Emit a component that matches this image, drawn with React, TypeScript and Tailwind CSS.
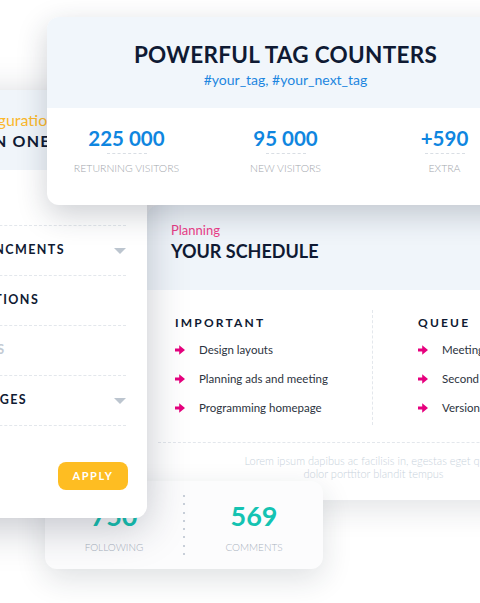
import React from 'react';

const font = { fontFamily: 'Lato, "Noto Sans", sans-serif' };

function Arrow() {
  return (
    <svg width="10" height="10" viewBox="0 0 10 10" className="shrink-0">
      <path d="M0 3.6h4.2V0.2L10 5l-5.8 4.8V6.4H0z" fill="#e6007e" />
    </svg>
  );
}

function Caret() {
  return (
    <svg width="12" height="6" viewBox="0 0 12 6">
      <path d="M0 0h12L6 6z" fill="#bcc5cf" />
    </svg>
  );
}

const menu = [
  { label: 'ANNOUNCMENTS', caret: true, muted: false },
  { label: 'PROMOTIONS', caret: false, muted: false },
  { label: 'UPDATES', caret: false, muted: true },
  { label: 'LANGUAGES', caret: true, muted: false },
];

const important = ['Design layouts', 'Planning ads and meeting', 'Programming homepage'];
const queue = ['Meeting with client', 'Second draft', 'Version control'];

const counters = [
  { value: '225 000', label: 'Returning visitors' },
  { value: '95 000', label: 'New visitors' },
  { value: '+590', label: 'Extra' },
];

export default function App() {
  return (
    <div className="relative h-[603px] w-[480px] overflow-hidden bg-white" style={font}>
      {/* schedule card */}
      <div className="absolute left-[147px] top-[205px] flex h-[295px] w-[453px] flex-col overflow-hidden rounded-xl bg-white shadow-[0_10px_30px_rgba(30,40,60,0.12)]">
        <div className="h-[85px] bg-[#f0f5fa] pl-[24px] pt-[16px]">
          <p className="text-[13px] leading-[18px] text-[#ec3d88]">Planning</p>
          <h2 className="text-[18px] font-bold leading-[24px] text-[#0f1a33]">YOUR SCHEDULE</h2>
        </div>
        <div className="flex pl-[28px] pt-[20px]">
          <div className="w-[197px] pb-[8px] pt-[4px]">
            <h3 className="text-[12px] font-bold leading-[18px] tracking-[2.2px] text-[#0f1a33]">IMPORTANT</h3>
            <ul className="mt-[9px] flex flex-col gap-[11px]">
              {important.map((t) => (
                <li key={t} className="flex h-[18px] items-center gap-[14px] text-[11.5px] text-[#2c3340]">
                  <Arrow />
                  {t}
                </li>
              ))}
            </ul>
          </div>
          <div className="border-l border-dashed border-[#e3e7ec] pl-[45px] pt-[4px]">
            <h3 className="text-[12px] font-bold leading-[18px] tracking-[2.2px] text-[#0f1a33]">QUEUE</h3>
            <ul className="mt-[9px] flex flex-col gap-[11px]">
              {queue.map((t) => (
                <li key={t} className="flex h-[18px] items-center gap-[14px] whitespace-nowrap text-[11.5px] text-[#2c3340]">
                  <Arrow />
                  {t}
                </li>
              ))}
            </ul>
          </div>
        </div>
        <div className="mx-[11px] mt-[17px] border-t border-dashed border-[#e3e7ec]" />
        <p className="mt-[11px] text-center text-[11px] font-light leading-[13px] text-[#c9d3dd]">
          Lorem ipsum dapibus ac facilisis in, egestas eget quam.
          <br />
          dolor porttitor blandit tempus
        </p>
      </div>

      {/* bottom stats card */}
      <div className="absolute left-[45px] top-[481px] flex h-[88px] w-[278px] items-center rounded-xl bg-[#fcfcfd] shadow-[0_10px_30px_rgba(30,40,60,0.14)]">
        <div className="flex flex-1 flex-col items-center pt-[2px]">
          <span className="text-[27px] font-bold leading-[32px] text-[#14c3b2]">750</span>
          <span className="mt-[9px] text-[10px] font-light leading-[12px] text-[#a9b2bd]">FOLLOWING</span>
        </div>
        <div className="flex h-[60px] flex-col justify-between">
          {[0, 1, 2, 3, 4, 5, 6, 7].map((i) => (
            <span key={i} className="h-[2px] w-[2px] rounded-full bg-[#b7c0cc]" />
          ))}
        </div>
        <div className="flex flex-1 flex-col items-center pt-[2px]">
          <span className="text-[27px] font-bold leading-[32px] text-[#14c3b2]">569</span>
          <span className="mt-[9px] text-[10px] font-light leading-[12px] text-[#a9b2bd]">COMMENTS</span>
        </div>
      </div>

      {/* configuration card */}
      <div className="absolute left-[-160px] top-[90px] flex h-[428px] w-[307px] flex-col overflow-hidden rounded-xl bg-white shadow-[0_10px_40px_rgba(30,40,60,0.26)]">
        <div className="h-[80px] bg-[#f0f5fa] pl-[112px] pt-[20px]">
          <p className="whitespace-nowrap pl-[8px] text-[16px] leading-[20px] text-[#fbb82b]">Configuration</p>
          <h2 className="whitespace-nowrap text-[16px] font-bold leading-[22px] tracking-[1.2px] text-[#0f1a33]">ALL IN ONE</h2>
        </div>
        <div className="mr-[21px] mt-[55px] pl-[100px]">
          {menu.map((m) => (
            <div
              key={m.label}
              className="flex h-[50px] items-center justify-between border-t border-dashed border-[#e3e7ec]"
            >
              <span
                className={`whitespace-nowrap text-[12.5px] font-bold tracking-[1.4px] ${m.muted ? 'text-[#c3cad3]' : 'text-[#0f1a33]'}`}
              >
                {m.label}
              </span>
              {m.caret && <Caret />}
            </div>
          ))}
          <div className="border-t border-dashed border-[#e3e7ec]" />
        </div>
        <div className="mr-[19px] mt-[36px] flex justify-end">
          <button className="h-[28px] w-[70px] rounded-lg bg-[#febd22] text-[11px] font-bold tracking-[1.6px] text-white">
            APPLY
          </button>
        </div>
      </div>

      {/* tag counters card */}
      <div className="absolute left-[47px] top-[17px] h-[188px] w-[477px] overflow-hidden rounded-xl bg-white shadow-[0_10px_30px_rgba(30,40,60,0.22)]">
        <div className="flex h-[91px] flex-col items-center bg-[#f1f6fb] pt-[24px]">
          <h1 className="text-[22.5px] font-bold leading-[28px] tracking-[0.3px] text-[#0f1a33]">POWERFUL TAG COUNTERS</h1>
          <p className="mt-[2px] text-[14px] leading-[18px] text-[#1d86e0]">#your_tag, #your_next_tag</p>
        </div>
        <div className="grid grid-cols-3 pt-[17px]">
          {counters.map((c) => (
            <div key={c.label} className="flex flex-col items-center">
              <span className="text-[20.5px] font-bold leading-[26px] text-[#0f86e0]">{c.value}</span>
              <span className="mt-[2px] w-[40px] border-t border-dashed border-[#d9dee4]" />
              <span className="mt-[8px] text-[10.5px] font-light uppercase leading-[12px] text-[#a3a7ad]">{c.label}</span>
            </div>
          ))}
        </div>
      </div>
    </div>
  );
}
